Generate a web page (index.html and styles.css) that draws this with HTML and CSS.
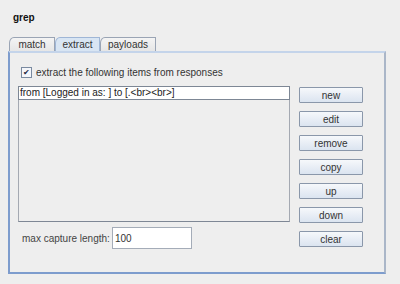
FILE: index.html
```
<!DOCTYPE html>
<html lang="en">
<head>
    <meta charset="UTF-8">
    <title>grep</title>
    <link rel="stylesheet" href="styles.css">
</head>
<body>

    <h2 class="title">grep</h2>

    <div class="tabs">
        <span class="tab tab-match">match</span>
        <span class="tab tab-extract active">extract</span>
        <span class="tab tab-payloads">payloads</span>
    </div>

    <div class="panel">
        <label class="check-row">
            <span class="checkbox">&#10004;</span>
            extract the following items from responses
        </label>

        <div class="main">
            <div class="left">
                <div class="list">
                    <div class="list-item">from [Logged in as: ] to [.&lt;br&gt;&lt;br&gt;]</div>
                </div>
                <div class="capture-row">
                    <span class="capture-label">max capture length:</span>
                    <input class="capture-input" type="text" value="100">
                </div>
            </div>
            <div class="buttons">
                <button class="btn">new</button>
                <button class="btn">edit</button>
                <button class="btn">remove</button>
                <button class="btn">copy</button>
                <button class="btn">up</button>
                <button class="btn">down</button>
                <button class="btn">clear</button>
            </div>
        </div>
    </div>

</body>
</html>
```

FILE: styles.css
```
* {
    margin: 0;
    padding: 0;
    box-sizing: border-box;
    font-family: "Liberation Sans", Arial, sans-serif;
}

body {
    background-color: #eeeeee;
    color: #333333;
    font-size: 10px;
    width: 400px;
    height: 284px;
    overflow: hidden;
}

.title {
    font-size: 10px;
    font-weight: bold;
    color: #111111;
    padding: 12px 0 0 13px;
    height: 37px;
    line-height: 12px;
}

.tabs {
    display: flex;
    margin-left: 9px;
    height: 14px;
}

.tab {
    height: 14px;
    border: 1px solid #9aa4b4;
    border-bottom: none;
    border-top-left-radius: 5px 6px;
    background: linear-gradient(#f4f4f4, #e6e6e6);
    line-height: 13px;
    font-size: 10px;
    text-align: center;
    color: #333333;
}

.tab-match {
    width: 46px;
}

.tab-extract {
    width: 45px;
}

.tab-payloads {
    width: 56px;
}

.tab.active {
    background: #d8e5f3;
    border-color: #9fb6d6;
}

.panel {
    margin-left: 8px;
    width: 378px;
    height: 223px;
    border: 2px solid #7d9ccd;
    border-top-color: #c4d4ea;
    border-right-color: #aab6c8;
    padding: 14px 0 0 8px;
}

.check-row {
    display: flex;
    align-items: center;
    gap: 4px;
    height: 11px;
    margin-left: 3px;
    color: #333333;
}

.checkbox {
    width: 11px;
    height: 11px;
    border: 1px solid #7a8aa0;
    background: #f4f6fa;
    font-size: 8px;
    line-height: 9px;
    text-align: center;
    color: #1e2a44;
}

.main {
    display: flex;
    gap: 9px;
    margin-top: 8px;
}

.left {
    display: flex;
    flex-direction: column;
    gap: 5px;
}

.list {
    width: 272px;
    height: 136px;
    border: 1px solid #a4a9b2;
    border-bottom-color: #7e8795;
    background: #eeeeee;
}

.list-item {
    height: 14px;
    background: #ffffff;
    border: 1px solid #7d8795;
    margin: -1px -1px 0 -1px;
    line-height: 12px;
    padding-left: 1px;
    color: #222222;
}

.buttons {
    display: flex;
    flex-direction: column;
    gap: 8px;
    margin-top: 1px;
}

.btn {
    width: 64px;
    height: 16px;
    border: 1px solid #8a97aa;
    border-radius: 1px;
    background: linear-gradient(#f6f8fb, #dbe4f0);
    font-size: 10px;
    color: #333333;
    line-height: 13px;
}

.capture-row {
    display: flex;
    align-items: center;
    margin-left: 4px;
}

.capture-label {
    width: 90px;
    color: #444444;
}

.capture-input {
    width: 80px;
    height: 22px;
    border: 1px solid #a4acb8;
    background: #ffffff;
    font-size: 10px;
    padding-left: 2px;
    color: #333333;
    outline: none;
}
```
